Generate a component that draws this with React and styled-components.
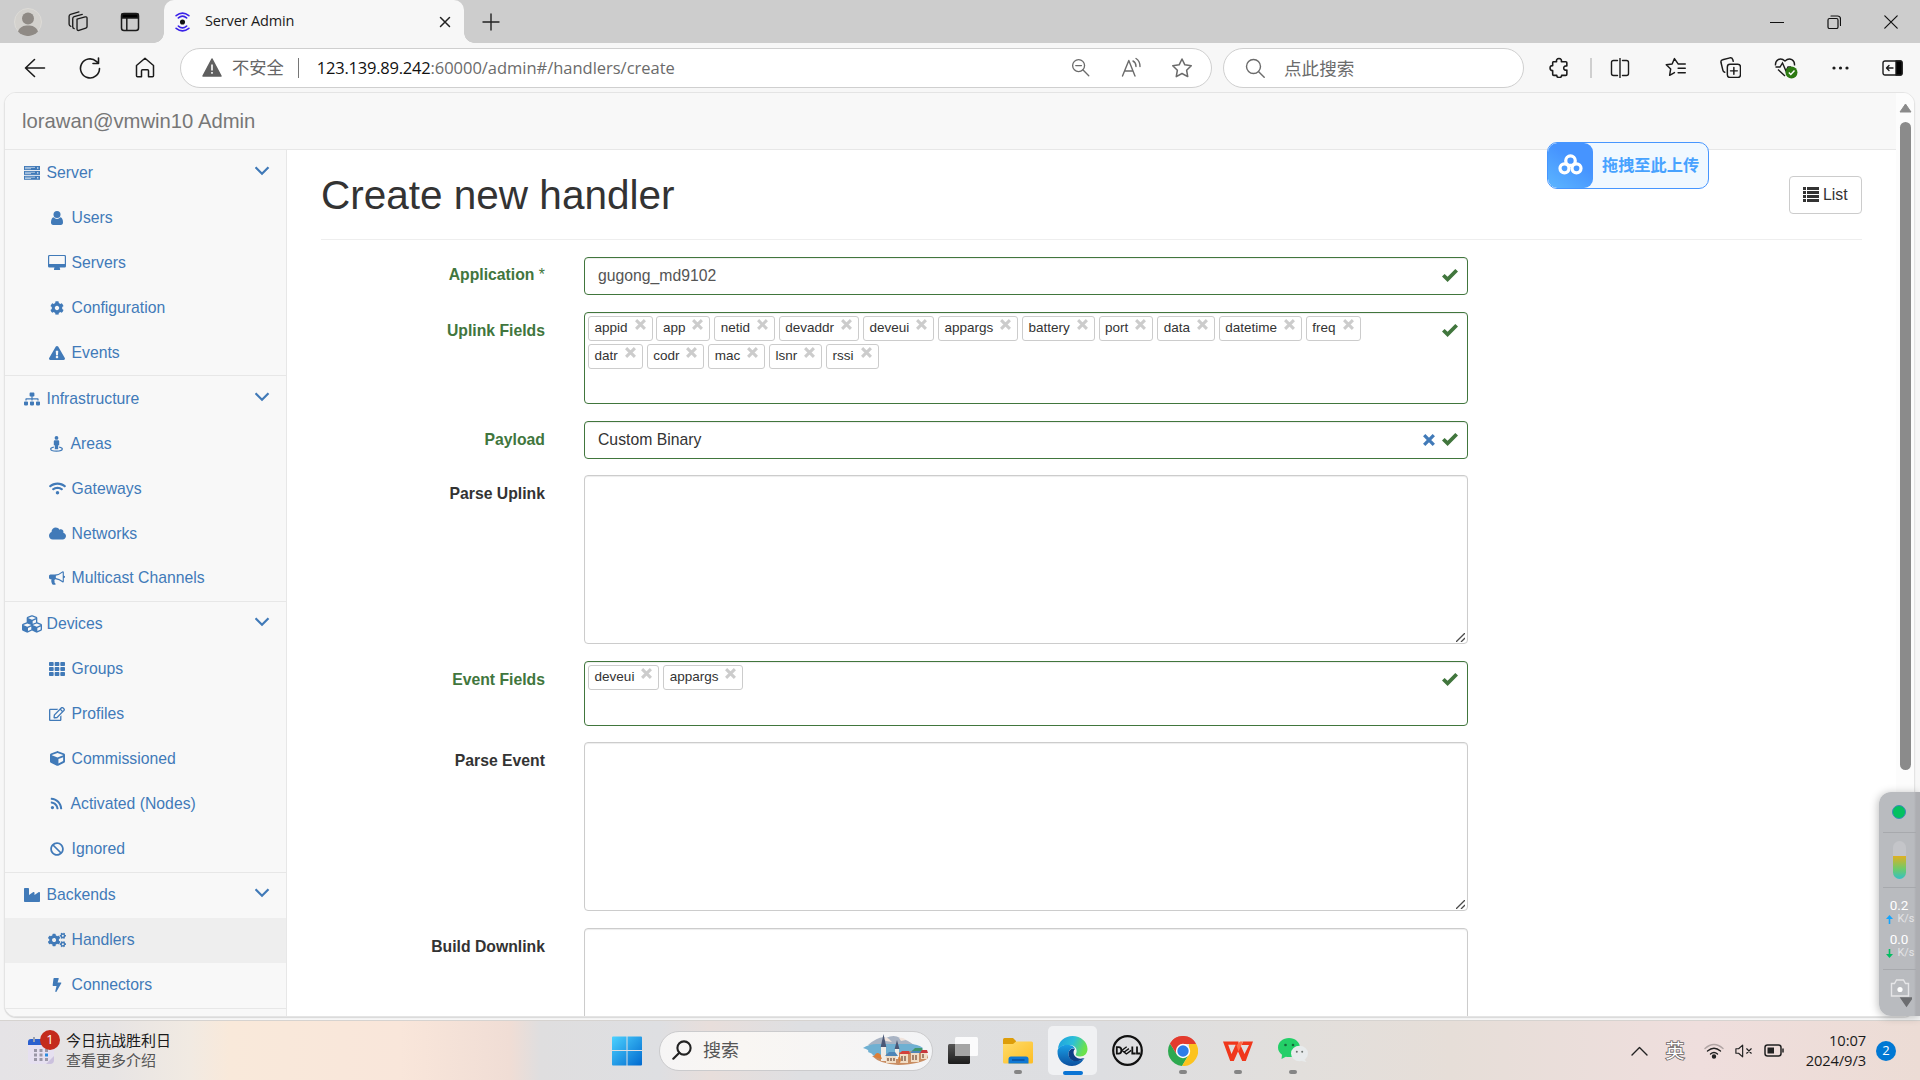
import React from "react";
import styled, { createGlobalStyle, css } from "styled-components";
import {
  FaCog, FaExclamationTriangle, FaSitemap, FaWifi, FaCloud, FaCubes, FaTh,
  FaRegEdit, FaCube, FaRss, FaBan, FaIndustry, FaCogs, FaBolt,
} from "react-icons/fa";

const GlobalStyle = createGlobalStyle`
  * { box-sizing: border-box; }
  body { margin: 0; background: #f7f7f7; overflow: hidden; }
`;

const uiFont = `"Open Sans", "Noto Sans CJK SC", sans-serif`;
const pageFont = `"Liberation Sans", Arial, sans-serif`;
const link = "#417ab8";
const green = "#41763d";

const Screen = styled.div`
  width: 1920px; height: 1080px; display: flex; flex-direction: column;
  background: #f7f7f7; overflow: hidden; position: relative; font-family: ${uiFont};
`;

/* ---------- browser chrome ---------- */
const TabStrip = styled.div`
  height: 43px; flex: none; background: #cdcdcd; display: flex; align-items: stretch;
`;
const Slot = styled.div`
  width: ${(p) => p.$w}px; flex: none; display: flex; align-items: center; justify-content: center;
  svg { display: block; }
`;
const Tab = styled.div`
  width: 300px; background: #f7f7f7; border-radius: 10px 10px 0 0; display: flex; align-items: center;
  position: relative; padding: 0 13px 0 10px;
  &::before, &::after {
    content: ""; position: absolute; bottom: 0; width: 10px; height: 10px;
  }
  &::before { left: -10px; background: radial-gradient(circle at 0 0, #cdcdcd 9.5px, #f7f7f7 10px); }
  &::after { right: -10px; background: radial-gradient(circle at 100% 0, #cdcdcd 9.5px, #f7f7f7 10px); }
`;
const TabTitle = styled.div`
  flex: 1; margin-left: 14px; font-size: 14.5px; letter-spacing: -0.15px; color: #1b1b1b; line-height: 20px;
  padding-bottom: 1px;
`;
const Spacer = styled.div`flex: 1;`;
const Toolbar = styled.div`
  height: 49px; flex: none; display: flex; align-items: center; padding: 0 0 0 7px; color: #1b1b1b;
`;
const Pill = styled.div`
  height: 40px; width: ${(p) => p.$w}px; margin: 1px 0 0 ${(p) => p.$ml}px; flex: none;
  border: 1px solid #cfcfcf; border-radius: 20px; background: #fff; display: flex; align-items: center;
  color: #6b6b6b; padding: 0 0 1px ${(p) => p.$pl}px;
`;
const Insecure = styled.span`
  font-size: 17.3px; line-height: 24px; margin-left: 10px; color: #666;
`;
const PillRule = styled.i`
  width: 1px; height: 20px; background: #767676; margin: 0 18px 0 14px;
`;
const Url = styled.span`
  font-size: 16.5px; line-height: 24px; letter-spacing: ${(p) => p.$ls}px; color: ${(p) => (p.$host ? "#111" : "#6b6b6b")};
  white-space: nowrap;
`;
const SearchHint = styled.span`font-size: 17.6px; line-height: 24px; margin-left: 19px;`;
const ToolRule = styled.i`width: 2px; height: 20px; background: #cfcfcf; flex: none;`;

/* ---------- web page ---------- */
const Page = styled.div`
  width: 1911px; height: 925px; flex: none; margin-left: 4px; border: 1px solid #e4e4e4;
  border-radius: 12px; overflow: hidden; background: #fff; display: flex; box-shadow: 0 1px 1px #d8d8d8;
  font-family: ${pageFont}; font-size: 15.75px; color: #333;
`;
const PageBody = styled.div`flex: 1; display: flex; flex-direction: column; min-width: 0;`;
const NavHeader = styled.div`
  height: 57px; flex: none; background: #f8f8f8; border-bottom: 1px solid #e7e7e7;
  padding: 1px 0 0 17px; display: flex; align-items: center; font-size: 20.25px; color: #777;
`;
const Columns = styled.div`flex: 1; display: flex; min-height: 0;`;
const Sidebar = styled.div`
  width: 282px; flex: none; background: #f8f8f8; border-right: 1px solid #e7e7e7; overflow: hidden; color: ${link};
`;
const Group = styled.div`border-bottom: 1px solid #e7e7e7;`;
const NavRow = styled.div`
  height: 45px; display: flex; align-items: center; padding: 0 16px ${(p) => (p.$raised ? 2 : 0)}px ${(p) => (p.$sub ? 42 : 17)}px;
  background: ${(p) => (p.$active ? "#eee" : "transparent")};
  span { flex: 1; line-height: 22px; }
`;
const IconBox = styled.i`
  width: ${(p) => (p.$narrow ? 19.2 : 20.2)}px; margin-right: 4.4px; display: flex; justify-content: center; flex: none;
  svg { display: block; overflow: visible; }
`;
const Fold = styled.i`display: block; margin-bottom: 3px; svg { display: block; }`;
const Main = styled.div`flex: 1; padding: 0 34px 0 34px; overflow: hidden; min-width: 0;`;
const TitleBar = styled.div`
  height: 90px; border-bottom: 1px solid #eee; display: flex; justify-content: space-between; align-items: flex-start;
`;
const Title = styled.h1`
  margin: 22.5px 0 0 0; font-size: 40.5px; font-weight: 400; line-height: 45px;
`;
const ListButton = styled.button`
  margin: 26px 0 0; width: 73px; height: 38px; border: 1px solid #ccc; border-radius: 4px; background: #fff;
  color: #333; font: 15.75px ${pageFont}; display: flex; align-items: center; gap: 4px; padding: 0 0 1px 13px;
`;
const Form = styled.div`padding-top: 17px; display: flex; flex-direction: column;`;
const Field = styled.div`display: flex; margin-bottom: ${(p) => p.$gap ?? 17}px;`;
const Label = styled.label`
  width: 224px; margin-right: 39px; padding-top: ${(p) => p.$pt ?? 9}px; text-align: right; font-weight: 700; line-height: 20px;
  color: ${(p) => (p.$ok ? green : "#333")};
`;
const Star = styled.span`font-weight: 400;`;
const Control = styled.div`
  width: 884px; height: ${(p) => p.$h}px; border: 1px solid ${(p) => (p.$ok ? green : "#ccc")};
  border-radius: 4px; background: #fff; box-shadow: inset 0 1px 1px rgba(0, 0, 0, 0.075);
  display: flex; justify-content: space-between; color: ${(p) => p.$color ?? "#333"};
`;
const Value = styled.div`padding-left: 13px; line-height: 35px;`;
const Marks = styled.div`
  height: 36px; display: flex; align-items: center; gap: 7px; padding: 0 9px 1px 0; flex: none;
`;
const Grip = styled.div`align-self: flex-end; margin-left: auto; padding: 0 2px 1px 0; svg { display: block; }`;
const Tags = styled.div`
  width: 800px; display: flex; flex-wrap: wrap; align-content: flex-start; column-gap: 3.7px; row-gap: 3px; padding: 3px;
`;
const Tag = styled.div`
  height: 25px; border: 1px solid #ccc; border-radius: 3px; padding: 0 6px 0 5.6px; display: flex; gap: 7px;
  font-size: 13.5px; line-height: 21px;
  svg { margin-top: 2px; }
`;
const ScrollTrack = styled.div`
  width: 18px; flex: none; background: #fcfcfc; display: flex; flex-direction: column; align-items: center; padding-top: 10px;
  svg { display: block; }
`;
const ScrollThumb = styled.div`width: 11px; height: 648px; margin-top: 9px; border-radius: 6px; background: #8b8b8b;`;

/* ---------- floating widgets ---------- */
const UploadPill = styled.div`
  position: absolute; left: 1547px; top: 142px; width: 162px; height: 47px; border: 1px solid #4696ff;
  border-radius: 10px; background: #f0f8ff; display: flex; align-items: center; overflow: hidden;
  color: #47a2ff; font: 700 16.2px/22px ${uiFont};
  span { padding-bottom: 1px; }
`;
const UploadIcon = styled.div`
  width: 45px; height: 100%; border-radius: 9px; background: linear-gradient(35deg, #5cb6ff, #4694ff 60%);
  display: flex; align-items: center; justify-content: center; margin-right: 9px; padding-bottom: 2px;
`;
const Monitor = styled.div`
  position: absolute; left: 1879px; top: 792px; width: 41px; height: 224px; border-radius: 12px 0 0 12px;
  background: linear-gradient(90deg, #b9bbbf 0 35px, #adaeb2 37px); box-shadow: -1px 1px 8px rgba(0, 0, 0, 0.25);
  display: flex; flex-direction: column; color: #fff; font-family: Roboto, sans-serif;
`;
const MonitorCell = styled.div`
  height: ${(p) => p.$h}px; width: 33px; margin-left: 4px; border-bottom: ${(p) => (p.$last ? 0 : 1)}px solid #a7a9ad;
  display: flex; flex-direction: column; align-items: center; justify-content: ${(p) => (p.$pt ? "flex-start" : "center")};
  padding: ${(p) => p.$pt ?? 0}px 1px 0 0;
`;
const GreenDot = styled.i`width: 14px; height: 14px; border-radius: 50%; background: #04c160; border: 1px solid #3d8bb8;`;
const Gauge = styled.i`
  width: 13px; height: 38px; border-radius: 7px; background: linear-gradient(#c4c5c9 0 15px, #dfb022 15px, #6dcb6a 28px, #35c0c4);
`;
const Speed = styled.div`font-size: 13.5px; line-height: 15px; text-align: center;`;
const Unit = styled.div`
  font-size: 10.8px; line-height: 12px; display: flex; align-items: center; gap: 5px; color: #e4e4e6; margin: 0 0 7px 2px;
`;

/* ---------- taskbar ---------- */
const Taskbar = styled.div`
  height: 60px; margin-top: 3px; flex: none; border-top: 1px solid #d6d3d0; display: flex; align-items: center;
  background: linear-gradient(90deg, #e5e3e6 0, #e7e4e4 110px, #f1eae2 190px, #f9e9da 230px, #f9e6da 400px, #f0ddd5 510px,
    #dfdedf 540px, #dedfe2 660px, #e8dedb 710px, #dedfe2 800px, #dddee1 1100px, #e2dfdc 1300px, #e6ded8 1450px, #efdedd 1700px, #ecdcd5 1920px);
`;
const Weather = styled.div`
  width: 572px; height: 100%; padding-left: 28px; display: flex; align-items: center; gap: 12px;
`;
const CalendarIcon = styled.div`position: relative; width: 26px; height: 28px; svg { display: block; }`;
const Badge = styled.div`
  width: 20px; height: 20px; border-radius: 50%; background: ${(p) => p.$bg}; color: #fff; font-size: 13px; line-height: 19px;
  text-align: center; flex: none;
  ${(p) => p.$over && css`position: absolute; left: 12px; top: -7px;`}
`;
const TwoLines = styled.div`
  font: 15px/20px ${uiFont}; color: #1a1a1a; white-space: nowrap; padding-bottom: 2px;
  small { font-size: 15px; color: #555; display: block; }
`;
const TaskSearch = styled.div`
  width: 274px; height: 40px; margin: 0 2px 0 5px; border: 1px solid #cbcbcd; border-radius: 20px;
  background: linear-gradient(90deg, #f6f5f5, #f9f6f3 30%, #f3f4f6); display: flex; align-items: center; padding: 0 3px 1px 12px;
  font-size: 18px; color: #555; flex: none;
  span { flex: 1; margin-left: 11px; line-height: 24px; }
`;
const TaskItem = styled.div`
  width: 55px; height: 100%; flex: none; display: flex; align-items: center; justify-content: center; position: relative;
  svg { display: block; position: relative; }
  &::before {
    content: ""; position: absolute; left: 3px; top: 5px; width: 49px; height: 49px; border-radius: 5px;
    background: ${(p) => (p.$active ? "#f0f1f3" : "transparent")};
  }
  &::after {
    content: ""; position: absolute; left: calc(50% - ${(p) => (p.$active ? 10 : 4)}px); bottom: ${(p) => (p.$active ? 5 : 6)}px;
    width: ${(p) => (p.$active ? 20 : 8)}px; height: 4px; border-radius: 2px;
    background: ${(p) => (p.$active ? "#0a74d4" : p.$open ? "#858585" : "transparent")};
  }
`;
const Clock = styled.div`
  width: 71px; text-align: right; font-size: 14.7px; line-height: 20px; letter-spacing: -0.1px; color: #1a1a1a;
  margin-right: 10px; padding-bottom: 2px; white-space: nowrap;
`;
const Ime = styled.span`
  font-size: 19px; line-height: 24px; color: #fff; -webkit-text-stroke: 1.6px #6a6464; paint-order: stroke fill;
`;

/* ---------- drawings ---------- */
const Line = ({ w = 20, h = w, vb = "0 0 20 20", sw = 1.4, color = "currentColor", children }) => (
  <svg width={w} height={h} viewBox={vb} fill="none" stroke={color} strokeWidth={sw} strokeLinecap="round" strokeLinejoin="round">
    {children}
  </svg>
);
const starPath = "M10 1.8l2.6 5.3 5.8.8-4.2 4.1 1 5.8-5.2-2.8-5.2 2.8 1-5.8L1.6 7.9l5.8-.8z";
const Check = () => (
  <svg width="16" height="13" viewBox="0 0 16 13"><path fill={green} d="M0 7.6L2.6 5l3 2.7L13.3 0 16 2.5 5.6 13z" /></svg>
);
const Cross = ({ size = 11, color = "#ccc" }) => (
  <svg width={size} height={size} viewBox="0 0 11 11"><path stroke={color} strokeWidth="3" d="M1.1 1.1l8.8 8.8M9.9 1.1L1.1 9.900" /></svg>
);
const ServerIcon = () => (
  <svg width="16" height="14" viewBox="0 0 16 14">
    {[0, 4.9, 9.8].map((y) => (
      <g key={y}>
        <rect y={y} width="16" height="4" fill={link} />
        <path d={`M1 ${y + 1.4}h10M1 ${y + 2.7}h6`} stroke="#c8d9ea" strokeWidth=".8" />
        <rect x="13" y={y + 1.3} width="1.4" height="1.4" fill="#dbe6f1" />
      </g>
    ))}
  </svg>
);
const UserIcon = () => (
  <svg width="12" height="14" viewBox="0 0 12 14" fill={link}>
    <circle cx="6" cy="3.600" r="3.500" />
    <path d="M2.600 6.200Q4 8 6 8t3.400-1.800Q12 7 12 11.300 12 14 9.800 14H2.200Q0 14 0 11.300 0 7 2.600 6.200z" />
  </svg>
);
const DesktopIcon = () => (
  <svg width="18" height="15" viewBox="0 0 18 15">
    <path fill={link} fillRule="evenodd" d="M1.4 0h15.2A1.4 1.4 0 0 1 18 1.4v9.8a1.4 1.4 0 0 1-1.4 1.4h-5l.5 1.4v1H6v-1l.5-1.4H1.4A1.4 1.4 0 0 1 0 11.200V1.4A1.4 1.4 0 0 1 1.4 0zM1.2 1.5v7.600h15.600V1.5a.4.4 0 0 0-.4-.4H1.600a.4.4 0 0 0-.4.4z" />
  </svg>
);
const StreetIcon = () => (
  <svg width="13" height="16" viewBox="0 0 13 16">
    <circle cx="6.500" cy="1.900" r="1.900" fill={link} />
    <path fill={link} d="M4.800 4.200h3.400q1 0 1 1v4h-1v4H4.800v-4h-1v-4q0-1 1-1z" />
    <path fill="none" stroke={link} strokeWidth="1.200" d="M3.800 11.200C1.800 11.600.7 12.300.7 13c0 1.300 2.500 2.200 5.800 2.200s5.800-.9 5.800-2.200c0-.7-1.100-1.400-3.100-1.800" />
  </svg>
);
const BullhornIcon = () => (
  <svg width="16" height="16" viewBox="0 0 1792 1792">
    <path fill={link} d="M1664 640q53 0 90.500 37.500t37.500 90.500-37.500 90.500-90.500 37.500v384q0 52-38 90t-90 38q-417-347-812-380-58 19-91 66t-31 100.500 40 92.500q-20 33-23 65.500t6 58 33.500 55 48 50 61.500 50.500q-29 58-111.500 83t-168.500 11.500-132-55.500q-7-23-29.500-87.500t-32-94.500-23-89-15-101 3.500-98.500 22-110.500h-122q-66 0-113-47t-47-113v-192q0-66 47-113t113-47h480q435 0 896-384 52 0 90 38t38 90v384zm-128 604v-954q-394 302-768 343v270q377 42 768 341z" />
  </svg>
);
const Chevron = () => (
  <svg width="15" height="10" viewBox="0 0 15 10"><path fill="none" stroke={link} strokeWidth="2.200" d="M.5 1.200L7 7.800l6.500-6.600" /></svg>
);
const ListIcon = () => (
  <svg width="16" height="15" viewBox="0 0 16 15" fill="#333">
    {[0, 4, 8, 12].map((y) => <path key={y} d={`M0 ${y}h3v3H0zM4 ${y}h12v3H4z`} />)}
  </svg>
);
const Resizer = () => (
  <svg width="9" height="9" viewBox="0 0 9 9"><path stroke="#4a4a4a" strokeWidth="1.300" d="M0 9L9 0M5 9l4-4" /></svg>
);

const groups = [
  ["Server", ServerIcon, 16, [["Users", UserIcon, 13], ["Servers", DesktopIcon], ["Configuration", FaCog, 14], ["Events", FaExclamationTriangle, 16]]],
  ["Infrastructure", FaSitemap, 16, [["Areas", StreetIcon], ["Gateways", FaWifi, 17], ["Networks", FaCloud, 17], ["Multicast Channels", BullhornIcon]]],
  ["Devices", FaCubes, 20, [["Groups", FaTh, 16], ["Profiles", FaRegEdit, 16], ["Commissioned", FaCube, 15], ["Activated (Nodes)", FaRss, 13], ["Ignored", FaBan, 14]]],
  ["Backends", FaIndustry, 16, [["Handlers", FaCogs, 18], ["Connectors", FaBolt, 14]]],
];
const uplink = ["appid", "app", "netid", "devaddr", "deveui", "appargs", "battery", "port", "data", "datetime", "freq", "datr", "codr", "mac", "lsnr", "rssi"];

const TagList = ({ items }) => (
  <Tags>{items.map((t) => <Tag key={t}>{t}<Cross /></Tag>)}</Tags>
);

function BrowserChrome() {
  return (
    <>
      <TabStrip>
        <Slot $w={56}>
          <svg width="28" height="28" viewBox="0 0 28 28">
            <circle cx="14" cy="14" r="13.500" fill="#d3d1cd" stroke="#dddbd7" />
            <circle cx="14" cy="10.500" r="6" fill="#8f8a85" />
            <path d="M4 23.500c2-5 5.500-6 10-6s8 1 10 6a13.300 13.300 0 0 1-20 0z" fill="#8f8a85" />
          </svg>
        </Slot>
        <Slot $w={42}>
          <Line w={21} vb="0 0 22 22" color="#1b1b1b">
            <path d="M10.500 8.500l8.500-2.300q2-.4 2 1.500v8.500q0 1.300-1.300 1.700l-7.200 2.400q-2 .5-2-1.500z" />
            <path d="M7.500 18.500q-1.500-.3-1.500-2V8q0-1.500 1.500-2L16 3.500M4 16q-1.800-.5-1.800-2V5.500Q2.200 4 3.700 3.500L12.500 1" />
          </Line>
        </Slot>
        <Slot $w={64}>
          <Line w={20} color="#1b1b1b" sw={1.500}>
            <rect x="1.500" y="1.500" width="17" height="17" rx="2.500" />
            <path d="M2 2h16v4H2z" fill="#000" /><path d="M6.800 6v12" />
          </Line>
        </Slot>
        <Slot $w={2} />
        <Tab>
          <Line w={17} h={20} vb="0 0 18 22" color="#3a22e8" sw={1.800}>
            <circle cx="9" cy="11" r="2.800" fill="#111" stroke="none" />
            <path d="M4.500 6.500q4.500-3.800 9 0M2 4q7-5.500 14 0M4.500 15.500q4.500 3.800 9 0M2 18q7 5.500 14 0" />
          </Line>
          <TabTitle>Server Admin</TabTitle>
          <Line w={12} vb="0 0 12 12" sw={1.500} color="#222"><path d="M1.500 1.500l9 9M10.500 1.500l-9 9" /></Line>
        </Tab>
        <Slot $w={53}><Line w={18} vb="0 0 18 18" color="#222"><path d="M9 1v16M1 9h16" /></Line></Slot>
        <Spacer />
        <Slot $w={57}><Line w={14} vb="0 0 14 14" sw={1.200} color="#111"><path d="M.5 7.500h13" /></Line></Slot>
        <Slot $w={57}>
          <Line w={14} vb="0 0 14 14" sw={1.200} color="#111">
            <rect x="1" y="3.500" width="10" height="10" rx="1.500" /><path d="M4 1h6.500q3 0 3 3v6.500" />
          </Line>
        </Slot>
        <Slot $w={58}><Line w={14} vb="0 0 14 14" sw={1.200} color="#111"><path d="M.8.800l12.400 12.400M13.200.800L.800 13.200" /></Line></Slot>
      </TabStrip>
      <Toolbar>
        <Slot $w={56}><Line w={22} vb="0 0 22 22" sw={1.600}><path d="M20.500 11H1.500M10.500 2.500L1.500 11l9 8.500" /></Line></Slot>
        <Slot $w={54}><Line w={22} vb="0 0 22 22" sw={1.600}><path d="M20.500 11.500a9.500 9.500 0 1 1-3.200-7.200L19 6M19.500 1v5.500H14" /></Line></Slot>
        <Slot $w={56}><Line w={20} h={21} vb="0 0 20 21" sw={1.500}><path d="M1.500 8.500L10 1.300l8.500 7.200v10.200q0 1-1 1h-4v-6q0-1-1-1h-5q-1 0-1 1v6h-4q-1 0-1-1z" /></Line></Slot>
        <Pill $w={1032} $ml={7} $pl={21}>
          <svg width="20" height="19" viewBox="0 0 20 19">
            <path d="M10 1L19 18H1z" fill="#5f5f5f" stroke="#5f5f5f" strokeWidth="1.500" strokeLinejoin="round" />
            <path d="M10 6.500v6M10 14v1.800" stroke="#fff" strokeWidth="1.600" />
          </svg>
          <Insecure>不安全</Insecure><PillRule />
          <Url $host $ls={-0.23}>123.139.89.242</Url><Url $ls={-0.02}>:60000/admin#/handlers/create</Url>
          <Spacer />
          <Slot $w={50}><Line w={19}><circle cx="8" cy="8" r="6.300" /><path d="M12.700 12.700l6 6M5 8h6" /></Line></Slot>
          <Slot $w={52}><Line w={21} vb="0 0 21 20"><path d="M1.500 18.500L7.800 3l6.200 15.500M3.500 13.500h8.500M12 3.500q3 1.500 3 5.500M15 1q4 2.500 4 8" /></Line></Slot>
          <Slot $w={48}><Line w={22}><path d={starPath} /></Line></Slot>
          <Slot $w={5.500} />
        </Pill>
        <Pill $w={301} $ml={11} $pl={21}>
          <Line w={20}><circle cx="8.500" cy="8.500" r="7" /><path d="M13.700 13.700l5.500 5.500" /></Line>
          <SearchHint>点此搜索</SearchHint>
        </Pill>
        <Slot $w={4} />
        <Slot $w={62}>
          <Line w={21} sw={1.500}><path d="M4 4.500h3.200q-.5-3 2.300-3t2.300 3H16q1 0 1 1v3q-3-.3-3 2t3 2v4q0 1-1 1h-4q0 2-2.300 2t-2.300-2H4.500q-1 0-1-1V13Q1 13 1 10.500t2.500-2.300V5.500q0-1 .5-1z" /></Line>
        </Slot>
        <Slot $w={1}><ToolRule /></Slot>
        <Slot $w={57}><Line w={20} sw={1.400}><path d="M7.500 2.500h-4q-2 0-2 2v11q0 2 2 2h4M12.500 2.500h4q2 0 2 2v11q0 2-2 2h-4M10 .500v19" /></Line></Slot>
        <Slot $w={54}><Line w={21}><path d="M12.500 6.500L9 1.500 6.800 6.600l-5.600.8 4.200 4-1 6L9 14.800M12.500 6.600h6.800M12.500 10.800h6.800M12.500 15h6.800" /></Line></Slot>
        <Slot $w={56}><Line w={21}><rect x="7" y="7" width="12.500" height="12.500" rx="2.500" /><path d="M13.200 10v6.500M10 13.200h6.500M4.500 14.500Q3 14 2.700 12.500L.900 5Q.600 3 2.500 2.600L9.500.800q2-.3 2.600 1.500l.5 1.700" /></Line></Slot>
        <Slot $w={56}>
          <svg width="24" height="22" viewBox="0 0 24 22" fill="none" stroke="#1b1b1b" strokeWidth="1.400">
            <path d="M1.500 8.500C1 3.500 6-.5 11 4c5-4.500 10-.5 9.500 4.500M4 12.500l7 6.500M1.500 10H6l2.500-4 3.500 8 2-4h3" />
            <circle cx="17.500" cy="15.500" r="6" fill="#2c7a12" stroke="none" />
            <path d="M14.800 15.500l2 2 3.700-4" stroke="#fff" />
          </svg>
        </Slot>
        <Slot $w={53}><svg width="17" height="4" viewBox="0 0 17 4" fill="#1b1b1b"><circle cx="2" cy="2" r="1.600" /><circle cx="8.500" cy="2" r="1.600" /><circle cx="15" cy="2" r="1.600" /></svg></Slot>
        <Slot $w={51}>
          <Line w={21} h={16} vb="0 0 21 16" sw={1.400}><rect x="1" y="1" width="19" height="14" rx="2" /><path d="M14 1h4.500q1.500 0 1.500 1.500v11q0 1.500-1.500 1.500H14z" fill="#000" /><path d="M11 8H5M7 5.500L4.500 8 7 10.500" /></Line>
        </Slot>
      </Toolbar>
    </>
  );
}

function AdminPage() {
  return (
    <Page>
      <PageBody>
        <NavHeader>lorawan@vmwin10 Admin</NavHeader>
        <Columns>
          <Sidebar>
            {groups.map(([name, Icon, iconSize, items], g) => (
              <Group key={name}>
                <NavRow $raised={g > 1}>
                  <IconBox><Icon size={iconSize} /></IconBox><span>{name}</span><Fold><Chevron /></Fold>
                </NavRow>
                {items.map(([label, Sub, size]) => (
                  <NavRow key={label} $sub $raised={g > 1 || label === "Multicast Channels"} $active={label === "Handlers"}>
                    <IconBox $narrow={label[0] === "A"}><Sub size={size} /></IconBox><span>{label}</span>
                  </NavRow>
                ))}
              </Group>
            ))}
          </Sidebar>
          <Main>
            <TitleBar>
              <Title>Create new handler</Title>
              <ListButton><ListIcon />List</ListButton>
            </TitleBar>
            <Form>
              <Field>
                <Label $ok $pt={8}>Application <Star>*</Star></Label>
                <Control $ok $h={38} $color="#555"><Value>gugong_md9102</Value><Marks><Check /></Marks></Control>
              </Field>
              <Field>
                <Label $ok>Uplink Fields</Label>
                <Control $ok $h={92}><TagList items={uplink} /><Marks><Check /></Marks></Control>
              </Field>
              <Field $gap={16}>
                <Label $ok>Payload</Label>
                <Control $ok $h={38}><Value>Custom Binary</Value><Marks><Cross size={12} color={link} /><Check /></Marks></Control>
              </Field>
              <Field><Label>Parse Uplink</Label><Control $h={169}><Grip><Resizer /></Grip></Control></Field>
              <Field $gap={16}>
                <Label $ok>Event Fields</Label>
                <Control $ok $h={65}><TagList items={["deveui", "appargs"]} /><Marks><Check /></Marks></Control>
              </Field>
              <Field><Label>Parse Event</Label><Control $h={169}><Grip><Resizer /></Grip></Control></Field>
              <Field><Label>Build Downlink</Label><Control $h={169} /></Field>
            </Form>
          </Main>
        </Columns>
      </PageBody>
      <ScrollTrack>
        <svg width="13" height="10" viewBox="0 0 13 10"><path fill="#8b8b8b" stroke="#8b8b8b" strokeLinejoin="round" d="M6.500 1L12 9H1z" /></svg>
        <ScrollThumb />
      </ScrollTrack>
    </Page>
  );
}

const Town = () => (
  <svg width="67" height="32" viewBox="0 0 67 32">
    <path d="M6 11Q18 1 24 4q8-4 14 0 8 2 14 7z" fill="#a9b4c4" />
    <path d="M20 5q4-3 7 0l3 3-6-1zM37 4q4-1 7 2l-5 1z" fill="#f0e3dc" />
    <path d="M1 14q6-4 14-4h32q9 0 14 4l-6 8H12q-2-3-6-4 2-2-5-4z" fill="#6fb0d2" />
    <path d="M10 22q24-4 54-6l2 8q-6 6-30 7-18-1-26-9z" fill="#c98d62" />
    <path d="M19 13h5v14h-5zM33 15h4v10h-4z" fill="#f0ece6" />
    <path d="M21.500 0l2.800 13h-5.600zM35 6l2.400 9h-4.800z" fill="#4b5876" />
    <path d="M24 22h10v7H24zM38 20h8v9h-8zM49 19h8v9h-8zM59 18h6v7h-6z" fill="#f1ddc5" />
    <path d="M23 22l4-4h6l3 4zM48 19l3-3h7l2 3z" fill="#4e86b8" />
    <path d="M37 20l3-3h7l1 3z" fill="#d2413c" /><path d="M50 17l3-3h7l1 3z" fill="#41966a" /><path d="M58 19l2-3h5l1 3z" fill="#c8383c" />
    <path d="M26 24v3M29 24v3M32 24v3M40 22v5M43 22v5M51 21v5M54 21v5M61 20v4" stroke="#7b533e" strokeWidth="1.300" />
    <path d="M12 23q2-6 6-3l2 5zM36 24q2-4 3 2l-1 3z" fill="#dc7e36" />
  </svg>
);

function TaskbarArea() {
  return (
    <Taskbar>
      <Weather>
        <CalendarIcon>
          <svg width="26" height="28" viewBox="0 0 26 28">
            <rect y="2" width="26" height="25" rx="4" fill="#e6e0f0" /><path d="M0 8V5q0-3 3-3h20q3 0 3 3v3z" fill="#2a5fce" />
            <path d="M6 0v5" stroke="#98a0b0" strokeWidth="2" /><path d="M26 19v4q0 4-4 4h-4z" fill="#cbc1dd" />
            {[6, 11.500, 17].map((x) => [12, 16.500, 21].map((y) => (
              <rect key={`${x}-${y}`} x={x} y={y} width="3" height="3" fill={x === 17 && y === 16.5 ? "#2a8be0" : "#9a97a6"} />
            )))}
          </svg>
          <Badge $bg="#c42b1c" $over>1</Badge>
        </CalendarIcon>
        <TwoLines>今日抗战胜利日<small>查看更多介绍</small></TwoLines>
      </Weather>
      <Slot $w={27} />
      <TaskItem>
        <svg width="30" height="30" viewBox="0 0 30 30">
          <defs><linearGradient id="win" x1="0" y1="0" x2="1" y2="1"><stop stopColor="#4cd2ff" /><stop offset="1" stopColor="#0069cf" /></linearGradient></defs>
          <path fill="url(#win)" d="M1 .500h13.500V14H0V1.500q0-1 1-1zM15.500.500H29q1 0 1 1V14H15.500zM0 15h14.500v14.500H1q-1 0-1-1zM15.500 15H30v13.500q0 1-1 1H15.500z" />
        </svg>
      </TaskItem>
      <TaskSearch>
        <Line w={20} vb="0 0 20 20" sw={2.100} color="#222"><circle cx="12" cy="8" r="6.600" /><path d="M7.300 12.700L1.300 18.700" /></Line>
        <span>搜索</span><Town />
      </TaskSearch>
      <TaskItem>
        <svg width="30" height="30" viewBox="0 0 30 30">
          <defs><linearGradient id="tv" x1="0" y1="0" x2="0" y2="1"><stop stopColor="#555" /><stop offset="1" stopColor="#1c1c1c" /></linearGradient></defs>
          <rect y="8" width="22" height="20" rx="1.500" fill="url(#tv)" /><rect x="7" y="1" width="23" height="19" rx="1.500" fill="#fff" opacity=".88" />
          <rect x="7" y="8" width="15" height="12" fill="#a5a5a5" />
        </svg>
      </TaskItem>
      <TaskItem $open>
        <svg width="30" height="28" viewBox="0 0 30 28">
          <defs><linearGradient id="fd" x1="0" y1="0" x2="1" y2="1"><stop stopColor="#ffdc6a" /><stop offset="1" stopColor="#fdbd24" /></linearGradient></defs>
          <path d="M0 2.500Q0 1 1.500 1H10l3 3v4H0z" fill="#dd9d09" /><path d="M0 7h10l3-2.500h15.500Q30 4.500 30 6v19q0 1.500-1.500 1.500h-27Q0 26.500 0 25z" fill="url(#fd)" />
          <path d="M5.500 26.500V22q0-2.500 2.500-2.500h15q2.500 0 2.500 2.500v4.500z" fill="#0f78d4" /><path d="M9 23h12.500" stroke="#0a4f9c" strokeWidth="1.500" />
        </svg>
      </TaskItem>
      <TaskItem $active>
        <svg width="31" height="30" viewBox="0 0 31 30">
          <defs>
            <linearGradient id="e1" x1="0" y1="0" x2="1" y2=".3"><stop stopColor="#1c9de0" /><stop offset=".55" stopColor="#2dc0d8" /><stop offset="1" stopColor="#6ae24c" /></linearGradient>
            <linearGradient id="e2" x1="0" y1="0" x2="0" y2="1"><stop stopColor="#1aa0e6" /><stop offset="1" stopColor="#0b4f9f" /></linearGradient>
          </defs>
          <path d="M1 13C1.500 5 8 0 15.500 0 24 0 30.500 6 30.500 13c0 4.500-3 7.500-7.300 7.500-3.400 0-5-1.200-4.400-2.300 2-3.500.5-8.700-5.300-9.200C8 8.500 3 10 1 13z" fill="url(#e1)" />
          <path d="M.500 15C1 11 6 8.500 11 8.800c3.500.2 6.500 2 7 4.200-3-1.500-6.500.5-6.500 5C11.500 24 18 27.500 27 22.800c-2.500 4.500-7 7.200-12 7.200C6.500 30 0 23.500.500 15z" fill="url(#e2)" />
          <path d="M11.500 18c0-4 3.200-6.200 6.500-5-3 2.500-1.500 9 5.200 9.700l4.500-.6C19 28.500 11.500 24.500 11.500 18z" fill="#0c3f86" />
        </svg>
      </TaskItem>
      <TaskItem>
        <svg width="31" height="31" viewBox="0 0 31 31">
          <circle cx="15.500" cy="15.500" r="14.300" fill="none" stroke="#111" strokeWidth="2.200" />
          <g fill="none" stroke="#111" strokeWidth="1.800">
            <path d="M4.800 12.200h1.700q2.900 0 2.900 3.200t-2.900 3.200H4.800zM20.300 11.500v7h3.400M25 11.500v7h3.200" />
            <path d="M9.700 15.500l5-3.700M12 17.200l4.900-3.600M14.400 19l4.800-3.600M9.700 15.200l5 3.900" strokeWidth="1.400" />
          </g>
        </svg>
      </TaskItem>
      <TaskItem $open>
        <svg width="30" height="30" viewBox="0 0 30 30">
          <path d="M2 7.500A15 15 0 0 1 28 7.500H15z" fill="#e33b2e" /><path d="M2 7.500a15 15 0 0 0 12 22.400l7-11.500L8.500 18z" fill="#2da94f" />
          <path d="M28 7.500A15 15 0 0 1 14 30l7-11.800V7.500z" fill="#fcc31e" /><path d="M2 7.500L8.500 18 15 8h13A15 15 0 0 0 2 7.500z" fill="#e33b2e" />
          <circle cx="15" cy="15" r="7.200" fill="#fff" /><circle cx="15" cy="15" r="5.700" fill="#2b7de9" />
        </svg>
      </TaskItem>
      <TaskItem $open>
        <svg width="30" height="22" viewBox="0 0 30 22">
          <path d="M0 1.500h15.500v3.200H5.200l3.300 9.300L13 4h4l4.500 10L26 5h-7.500l1.700-3.500H30L22.800 21h-3.600L15 11.500 10.800 21H7.200z" fill="#f0371b" />
          <path d="M13.500 5.500L17 1.500h3l-4.500 10z" fill="#ff6b46" />
        </svg>
      </TaskItem>
      <TaskItem $open>
        <svg width="30" height="28" viewBox="0 0 30 28">
          <path d="M11 1C5 1 0 5 0 10.500c0 3 1.500 5.500 4 7.300L3.500 22l4.300-2.200c1 .2 2 .3 3.200.3 6 0 11-4.300 11-9.600S17 1 11 1z" fill="#24cf68" />
          <ellipse cx="21.500" cy="16.500" rx="8.500" ry="7.800" fill="#e8ebec" /><path d="M26 22l2.500 3-5-1z" fill="#e8ebec" />
          <circle cx="7.500" cy="8" r="1.300" fill="#15693a" /><circle cx="15" cy="8" r="1.300" fill="#15693a" />
          <circle cx="18.800" cy="14.800" r="1" fill="#68706c" /><circle cx="24.200" cy="14.800" r="1" fill="#68706c" />
        </svg>
      </TaskItem>
      <Spacer />
      <Slot $w={36}><Line w={17} h={10} vb="0 0 17 10" color="#222"><path d="M1 9l7.500-7.500L16 9" /></Line></Slot>
      <Slot $w={36}><Ime>英</Ime></Slot>
      <Slot $w={42}>
        <Line w={20} h={16} vb="0 0 20 16" color="#222" sw={1.400}>
          <path d="M1 5.500q9-8 18 0" opacity=".3" /><path d="M3.500 8q6.500-5.500 13 0M6.500 11q3.500-3 7 0" /><circle cx="10" cy="13.500" r="1.500" fill="#222" />
        </Line>
      </Slot>
      <Slot $w={18}>
        <Line w={20} h={16} vb="0 0 20 16" color="#222" sw={1.300}><path d="M1 5.500h3L8.500 1.500v13L4 10.500H1zM13 5.500l5 5M18 5.500l-5 5" /></Line>
      </Slot>
      <Slot $w={42}>
        <Line w={20} h={13} vb="0 0 20 13" color="#222" sw={1.500}><rect x="1" y="1" width="16" height="11" rx="2.500" /><path d="M19 5v3" /><rect x="3.500" y="3.500" width="6.500" height="6" fill="#222" stroke="none" /></Line>
      </Slot>
      <Clock>10:07<br />2024/9/3</Clock>
      <Badge $bg="#0078d4">2</Badge>
      <Slot $w={24} />
    </Taskbar>
  );
}

export default function App() {
  return (
    <Screen>
      <GlobalStyle />
      <BrowserChrome />
      <AdminPage />
      <TaskbarArea />
      <UploadPill>
        <UploadIcon>
          <svg width="25" height="21" viewBox="0 0 26 22" fill="none" stroke="#fff" strokeWidth="3.400">
            <circle cx="13" cy="7" r="5" /><circle cx="6.700" cy="15" r="4.700" /><circle cx="19.300" cy="15" r="4.700" />
          </svg>
        </UploadIcon>
        <span>拖拽至此上传</span>
      </UploadPill>
      <Monitor>
        <MonitorCell $h={41}><GreenDot /></MonitorCell>
        <MonitorCell $h={55}><Gauge /></MonitorCell>
        <MonitorCell $h={82} $pt={10}>
          <Speed>0.2</Speed>
          <Unit><svg width="7" height="9" viewBox="0 0 7 9"><path d="M3.500 0L7 4H4.300v5H2.700V4H0z" fill="#14a5ff" /></svg>K/s</Unit>
          <Speed>0.0</Speed>
          <Unit><svg width="7" height="9" viewBox="0 0 7 9"><path d="M3.500 9L0 5h2.700V0h1.600v5H7z" fill="#04bd62" /></svg>K/s</Unit>
        </MonitorCell>
        <MonitorCell $h={46} $last>
          <svg width="26" height="30" viewBox="0 0 26 30" fill="none" stroke="#e6e6e8" strokeWidth="1.400">
            <path d="M5.500 5.500h3L10.500 2h7l2 3.500h3V18h-17z" /><circle cx="14" cy="11.500" r="2.600" fill="#fff" stroke="none" />
            <path d="M15 20h11l-5.500 8z" fill="#6c6d70" stroke="#6c6d70" />
          </svg>
        </MonitorCell>
      </Monitor>
    </Screen>
  );
}
